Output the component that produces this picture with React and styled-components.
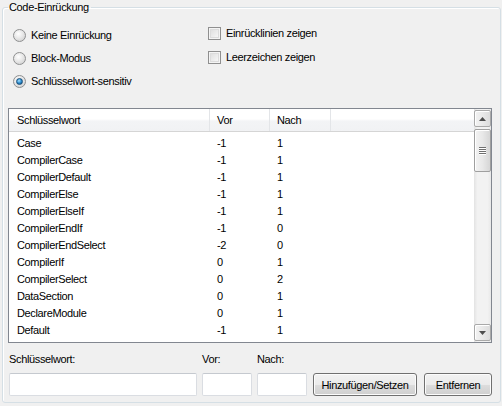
import styled, { createGlobalStyle } from "styled-components";

const GlobalStyle = createGlobalStyle`
  html, body {
    margin: 0;
    padding: 0;
    background: #f0f0f0;
  }
  body {
    font-family: "Liberation Sans", Arial, sans-serif;
    font-size: 11px;
    letter-spacing: -0.35px;
    color: #000;
  }
`;

const Page = styled.div`
  width: 502px;
  height: 406px;
  padding: 0 1px 0 2px;
  box-sizing: border-box;
`;

const GroupBox = styled.fieldset`
  margin: 0;
  padding: 0 8px 7px 5px;
  min-width: 0;
  height: 403px;
  box-sizing: border-box;
  border: 1px solid #d5dfe5;
  border-radius: 3px;
  box-shadow: inset 1px 1px 0 #fff;
`;

const Legend = styled.legend`
  padding: 0 2px 0 1px;
  margin-left: 0;
  line-height: 14px;
  font-size: 11px;
`;

const Options = styled.div`
  display: grid;
  grid-template-columns: 195px 1fr;
  height: 94px;
`;

const OptionColumn = styled.div`
  display: flex;
  flex-direction: column;
  gap: ${(p) => p.gap}px;
  padding-top: ${(p) => p.top}px;
  padding-left: ${(p) => p.left}px;
`;

const Option = styled.label`
  display: flex;
  align-items: center;
  height: 22px;
  gap: 5px;
  white-space: nowrap;
`;

const Radio = styled.span`
  width: 11px;
  height: 11px;
  border-radius: 50%;
  border: 1px solid #8f9091;
  background: radial-gradient(circle at 40% 35%, #ffffff 0%, #e8e8e8 45%, #c9c9c9 100%);
  display: flex;
  align-items: center;
  justify-content: center;
  flex-shrink: 0;
  &::after {
    content: "";
    display: ${(p) => (p.checked ? "block" : "none")};
    width: 5px;
    height: 5px;
    border-radius: 50%;
    border: 1px solid #1a4f7a;
    background: radial-gradient(circle at 40% 35%, #a9e2ff 0%, #2d8ed0 50%, #0b3f6e 100%);
  }
`;

const Check = styled.span`
  width: 11px;
  height: 11px;
  border: 1px solid #8f8f8f;
  background: linear-gradient(135deg, #d9d9d9 0%, #f2f2f2 70%, #fbfbfb 100%);
  box-shadow: inset 0 0 0 1px #f4f4f4, inset 0 0 0 2px #dcdcdc;
  flex-shrink: 0;
`;

const ListView = styled.div`
  display: flex;
  height: 235px;
  border: 1px solid #828790;
  background: #fff;
  box-sizing: border-box;
`;

const Table = styled.div`
  flex: 1;
  overflow: hidden;
`;

const cols = "201px 60px 61px 1fr";

const HeaderRow = styled.div`
  display: grid;
  grid-template-columns: ${cols};
  height: 23px;
  background: linear-gradient(#ffffff 0%, #ffffff 45%, #f3f4f6 55%, #f1f2f4 100%);
  border-bottom: 1px solid #d5d5d5;
  box-sizing: border-box;
`;

const HeaderCell = styled.div`
  display: flex;
  align-items: center;
  padding-left: ${(p) => p.pad}px;
  border-right: 1px solid #e3e5e8;
  white-space: nowrap;
`;

const Rows = styled.div`
  padding-top: 2px;
`;

const Row = styled.div`
  display: grid;
  grid-template-columns: ${cols};
  height: 17px;
  align-items: center;
`;

const Cell = styled.div`
  padding-left: ${(p) => p.pad}px;
  white-space: nowrap;
`;

const Scrollbar = styled.div`
  width: 17px;
  display: flex;
  flex-direction: column;
  padding: 1px 0;
  background: linear-gradient(90deg, #e3e3e3 0%, #f2f2f2 20%, #f2f2f2 80%, #e8e8e8 100%);
  box-sizing: border-box;
`;

const ScrollButton = styled.div`
  height: 17px;
  box-sizing: border-box;
  border: 1px solid #a9a9a9;
  border-radius: 2px;
  background: linear-gradient(90deg, #f3f3f3 0%, #e9e9e9 50%, #dcdcdc 100%);
  box-shadow: inset 1px 1px 0 #fff;
  display: flex;
  align-items: center;
  justify-content: center;
`;

const Thumb = styled.div`
  height: 43px;
  margin-top: 2px;
  box-sizing: border-box;
  border: 1px solid #9f9f9f;
  border-radius: 2px;
  background: linear-gradient(90deg, #f3f3f3 0%, #e8e8e8 50%, #d6d6d6 100%);
  box-shadow: inset 1px 1px 0 #fff;
  display: flex;
  flex-direction: column;
  align-items: center;
  justify-content: center;
  gap: 1px;
`;

const Grip = styled.span`
  width: 7px;
  height: 1px;
  background: #6f6f6f;
  box-shadow: 0 1px 0 #fff;
`;

const Track = styled.div`
  flex: 1;
`;

const Form = styled.div`
  display: grid;
  grid-template-columns: 188px 50px 50px auto auto;
  column-gap: 5px;
  margin-top: 8px;
  margin-left: 1px;
`;

const Label = styled.div`
  height: 16px;
  line-height: 16px;
  margin-bottom: 6px;
`;

const Input = styled.div`
  height: 23px;
  box-sizing: border-box;
  border: 1px solid #dadde2;
  border-top-color: #c5c9cf;
  border-radius: 2px;
  background: #fff;
`;

const Button = styled.button`
  height: 23px;
  width: ${(p) => p.w}px;
  margin-left: ${(p) => p.ml}px;
  padding: 0;
  font-family: "Liberation Sans", Arial, sans-serif;
  font-size: 11px;
  letter-spacing: -0.35px;
  color: #000;
  border: 1px solid #707070;
  border-radius: 3px;
  background: linear-gradient(#f2f2f2 0%, #ebebeb 50%, #dddddd 51%, #cfcfcf 100%);
  box-shadow: inset 0 0 0 1px #fcfcfc;
`;

const data = [
  ["Case", "-1", "1"],
  ["CompilerCase", "-1", "1"],
  ["CompilerDefault", "-1", "1"],
  ["CompilerElse", "-1", "1"],
  ["CompilerElseIf", "-1", "1"],
  ["CompilerEndIf", "-1", "0"],
  ["CompilerEndSelect", "-2", "0"],
  ["CompilerIf", "0", "1"],
  ["CompilerSelect", "0", "2"],
  ["DataSection", "0", "1"],
  ["DeclareModule", "0", "1"],
  ["Default", "-1", "1"],
];

const Arrow = ({ down }) => (
  <svg width="7" height="4" viewBox="0 0 7 4">
    <path d={down ? "M0 0 L7 0 L3.5 4 Z" : "M0 4 L7 4 L3.5 0 Z"} fill="#4d4d4d" />
  </svg>
);

const App = () => {
  return (
    <Page>
      <GlobalStyle />
      <GroupBox>
        <Legend>Code-Einrückung</Legend>
        <Options>
          <OptionColumn top={10} gap={1} left={5}>
            <Option>
              <Radio />
              Keine Einrückung
            </Option>
            <Option>
              <Radio />
              Block-Modus
            </Option>
            <Option>
              <Radio checked />
              Schlüsselwort-sensitiv
            </Option>
          </OptionColumn>
          <OptionColumn top={8} gap={2} left={5}>
            <Option>
              <Check />
              Einrücklinien zeigen
            </Option>
            <Option>
              <Check />
              Leerzeichen zeigen
            </Option>
          </OptionColumn>
        </Options>
        <ListView>
          <Table>
            <HeaderRow>
              <HeaderCell pad={8}>Schlüsselwort</HeaderCell>
              <HeaderCell pad={7}>Vor</HeaderCell>
              <HeaderCell pad={7}>Nach</HeaderCell>
              <div />
            </HeaderRow>
            <Rows>
              {data.map(([word, before, after]) => (
                <Row key={word}>
                  <Cell pad={8}>{word}</Cell>
                  <Cell pad={7}>{before}</Cell>
                  <Cell pad={7}>{after}</Cell>
                  <div />
                </Row>
              ))}
            </Rows>
          </Table>
          <Scrollbar>
            <ScrollButton>
              <Arrow />
            </ScrollButton>
            <Thumb>
              <Grip />
              <Grip />
              <Grip />
              <Grip />
            </Thumb>
            <Track />
            <ScrollButton>
              <Arrow down />
            </ScrollButton>
          </Scrollbar>
        </ListView>
        <Form>
          <div>
            <Label>Schlüsselwort:</Label>
            <Input />
          </div>
          <div>
            <Label>Vor:</Label>
            <Input />
          </div>
          <div>
            <Label>Nach:</Label>
            <Input />
          </div>
          <div>
            <Label />
            <Button w={104} ml={1}>Hinzufügen/Setzen</Button>
          </div>
          <div>
            <Label />
            <Button w={68} ml={2}>Entfernen</Button>
          </div>
        </Form>
      </GroupBox>
    </Page>
  );
};

export default App;
